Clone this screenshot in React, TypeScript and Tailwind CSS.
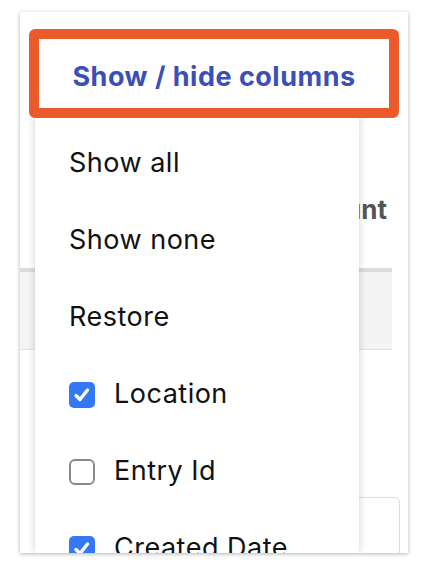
const menuFont = { fontFamily: "Inter, 'Noto Sans', sans-serif" };

function Checkbox({ checked }: { checked: boolean }) {
  if (checked) {
    return (
      <span className="flex h-[26px] w-[26px] shrink-0 items-center justify-center rounded-[5px] bg-[#3478f6]">
        <svg width="20" height="20" viewBox="0 0 20 20" fill="none">
          <path
            d="M4 10.5 L8 14.5 L15.5 5"
            stroke="white"
            strokeWidth="3.4"
            strokeLinecap="round"
            strokeLinejoin="round"
          />
        </svg>
      </span>
    );
  }
  return (
    <span className="h-[26px] w-[26px] shrink-0 rounded-[6px] border-2 border-[#8a8a8a] bg-white" />
  );
}

const actions = ["Show all", "Show none", "Restore"];
const columns = [
  { label: "Location", checked: true },
  { label: "Entry Id", checked: false },
  { label: "Created Date", checked: true },
];

export default function App() {
  return (
    <div className="h-[572px] w-[430px] bg-white pt-[12px] pl-[20px]" style={menuFont}>
      <div className="relative h-[541px] w-[388px] overflow-hidden bg-white shadow-[0_1px_4px_rgba(0,0,0,0.3)]">
        {/* table behind the menu */}
        <div className="flex h-[256px] justify-end pr-[21px] pt-[183px]">
          <span className="text-[26px] font-bold leading-[30px] text-[#555]">Amount</span>
        </div>
        <div className="mr-[16px] h-[4px] bg-[#dcdcdc]" />
        <div className="mr-[16px] h-[77px] bg-[#f4f4f4]" />
        <div className="mr-[16px] h-[1px] bg-[#e3e3e3]" />
        <div className="h-[147px]" />
        <div className="ml-[20px] mr-[8px] h-[100px] rounded-t-[5px] border border-[#dcdcdc]" />

        {/* dropdown menu */}
        <div className="absolute bottom-0 left-[15px] top-[96px] w-[324px] bg-white pt-[17px] pl-[34px] text-[#111] shadow-[0_0_8px_rgba(0,0,0,0.18)]">
          {actions.map((a) => (
            <div key={a} className="flex h-[77px] items-center text-[27px] tracking-[0.5px]">
              {a}
            </div>
          ))}
          {columns.map((c) => (
            <div key={c.label} className="flex h-[77px] items-center gap-[19px] text-[27px] tracking-[0.5px]">
              <Checkbox checked={c.checked} />
              <span>{c.label}</span>
            </div>
          ))}
        </div>

        {/* highlighted trigger */}
        <div className="absolute left-[9px] top-[17px] flex h-[89px] w-[370px] items-center justify-center rounded-[6px] border-[10px] border-[#ea5a2a] bg-white pt-[7px]">
          <span className="text-[27px] font-bold tracking-[0.5px] text-[#3b4fb6]">Show / hide columns</span>
        </div>
      </div>
    </div>
  );
}
